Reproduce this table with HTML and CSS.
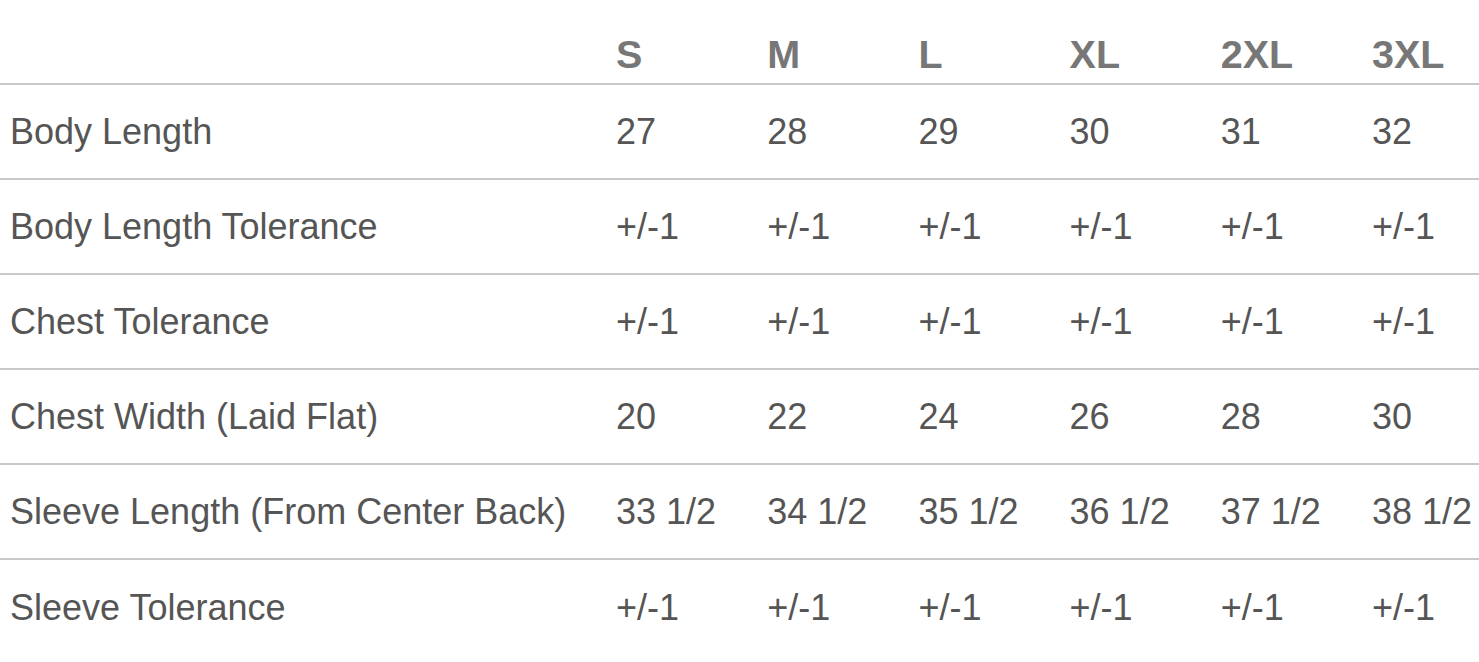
FILE: index.html
```html
<!DOCTYPE html>
<html lang="en">
<head>
<meta charset="utf-8">
<title>Size Chart</title>
<link rel="stylesheet" href="styles.css">
</head>
<body>
<div class="chart-wrap">
  <table class="size-chart">
    <colgroup>
      <col class="col-label">
      <col class="col-size">
      <col class="col-size">
      <col class="col-size">
      <col class="col-size">
      <col class="col-size">
      <col class="col-size">
    </colgroup>
    <thead>
      <tr>
        <th class="head-blank"></th>
        <th>S</th>
        <th>M</th>
        <th>L</th>
        <th>XL</th>
        <th>2XL</th>
        <th>3XL</th>
      </tr>
    </thead>
    <tbody>
      <tr>
        <td>Body Length</td>
        <td>27</td><td>28</td><td>29</td><td>30</td><td>31</td><td>32</td>
      </tr>
      <tr>
        <td>Body Length Tolerance</td>
        <td>+/-1</td><td>+/-1</td><td>+/-1</td><td>+/-1</td><td>+/-1</td><td>+/-1</td>
      </tr>
      <tr>
        <td>Chest Tolerance</td>
        <td>+/-1</td><td>+/-1</td><td>+/-1</td><td>+/-1</td><td>+/-1</td><td>+/-1</td>
      </tr>
      <tr>
        <td>Chest Width (Laid Flat)</td>
        <td>20</td><td>22</td><td>24</td><td>26</td><td>28</td><td>30</td>
      </tr>
      <tr>
        <td>Sleeve Length (From Center Back)</td>
        <td>33 1/2</td><td>34 1/2</td><td>35 1/2</td><td>36 1/2</td><td>37 1/2</td><td>38 1/2</td>
      </tr>
      <tr>
        <td>Sleeve Tolerance</td>
        <td>+/-1</td><td>+/-1</td><td>+/-1</td><td>+/-1</td><td>+/-1</td><td>+/-1</td>
      </tr>
    </tbody>
  </table>
</div>
</body>
</html>
```

FILE: styles.css
```css
html, body {
  margin: 0;
  padding: 0;
  background: #ffffff;
  overflow: hidden;
}

.chart-wrap {
  width: 100%;
  overflow: hidden;
}

.size-chart {
  border-collapse: collapse;
  table-layout: fixed;
  width: 1513px;
  font-family: "Liberation Sans", Arial, sans-serif;
}

.col-label {
  width: 606px;
}

.col-size {
  width: 151.2px;
}

.size-chart th {
  height: 84px;
  padding: 0 0 6px 10px;
  box-sizing: border-box;
  text-align: left;
  vertical-align: bottom;
  font-size: 39.5px;
  font-weight: bold;
  color: #777777;
  line-height: 46px;
  white-space: nowrap;
}

.size-chart td {
  height: 95px;
  padding: 1px 0 0 10px;
  box-sizing: border-box;
  text-align: left;
  vertical-align: middle;
  font-size: 36px;
  color: #555555;
  border-top: 2px solid #c8c8c8;
  white-space: nowrap;
}
```
